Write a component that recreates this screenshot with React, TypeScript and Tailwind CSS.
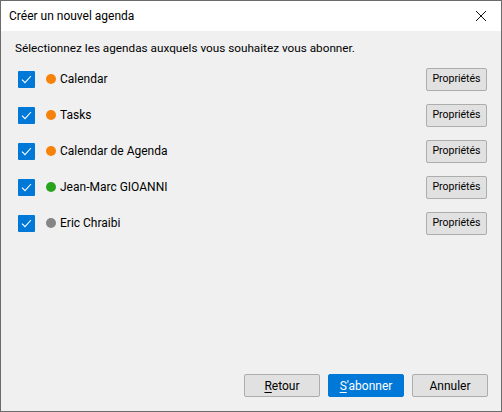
import React from "react";

const rows = [
  { name: "Calendar", color: "#f7820b" },
  { name: "Tasks", color: "#f7820b" },
  { name: "Calendar de Agenda", color: "#f7820b" },
  { name: "Jean-Marc GIOANNI", color: "#2aa31c" },
  { name: "Eric Chraibi", color: "#858585" },
];

function Check() {
  return (
    <div className="w-[17px] h-[17px] bg-[#0078d7] rounded-[1px] flex items-center justify-center shrink-0">
      <svg width="11" height="9" viewBox="0 0 11 9" fill="none">
        <path d="M1 4.6 L4 7.6 L10 1" stroke="white" strokeWidth="1.1" />
      </svg>
    </div>
  );
}

export default function App() {
  return (
    <div
      className="w-[502px] h-[412px] border border-[#6b6b6b] bg-[#f0f0f0] flex flex-col text-black"
      style={{ fontFamily: 'Roboto, "Noto Sans", sans-serif' }}
    >
      <div className="h-[30px] bg-white flex items-center justify-between pl-[8px] pr-[14px] shrink-0">
        <span className="text-[12px] leading-[16px]">Créer un nouvel agenda</span>
        <svg width="12" height="12" viewBox="0 0 12 12">
          <path d="M1 1 L11 11 M11 1 L1 11" stroke="#111" strokeWidth="1" />
        </svg>
      </div>
      <div className="flex-1 flex flex-col pl-[14px] pr-[14px]">
        <div className="mt-[9px] text-[11.75px] leading-[16px]">
          Sélectionnez les agendas auxquels vous souhaitez vous abonner.
        </div>
        <div className="mt-[5px] flex flex-col">
          {rows.map((r) => (
            <div key={r.name} className="h-[36px] flex items-center">
              <div className="pl-[3px]">
                <Check />
              </div>
              <div
                className="ml-[11px] w-[10px] h-[10px] rounded-full shrink-0"
                style={{ backgroundColor: r.color }}
              />
              <span className="ml-[4px] text-[12px] leading-[16px] flex-1">{r.name}</span>
              <button className="w-[61px] h-[23px] border border-[#adadad] bg-[#e1e1e1] rounded-[2px] text-[10.5px] leading-[14px] text-black">
                Propriétés
              </button>
            </div>
          ))}
        </div>
      </div>
      <div className="flex justify-end gap-[8px] pr-[13px] pb-[14px] shrink-0">
        <button className="w-[76px] h-[23px] border border-[#adadad] bg-[#e1e1e1] rounded-[2px] text-[12px] leading-[16px]">
          <span className="underline underline-offset-2">R</span>etour
        </button>
        <button className="w-[76px] h-[23px] border border-[#0078d7] bg-[#0078d7] rounded-[2px] text-[12px] leading-[16px] text-white">
          <span className="underline underline-offset-2">S</span>'abonner
        </button>
        <button className="w-[76px] h-[23px] border border-[#adadad] bg-[#e1e1e1] rounded-[2px] text-[12px] leading-[16px]">
          Annuler
        </button>
      </div>
    </div>
  );
}
